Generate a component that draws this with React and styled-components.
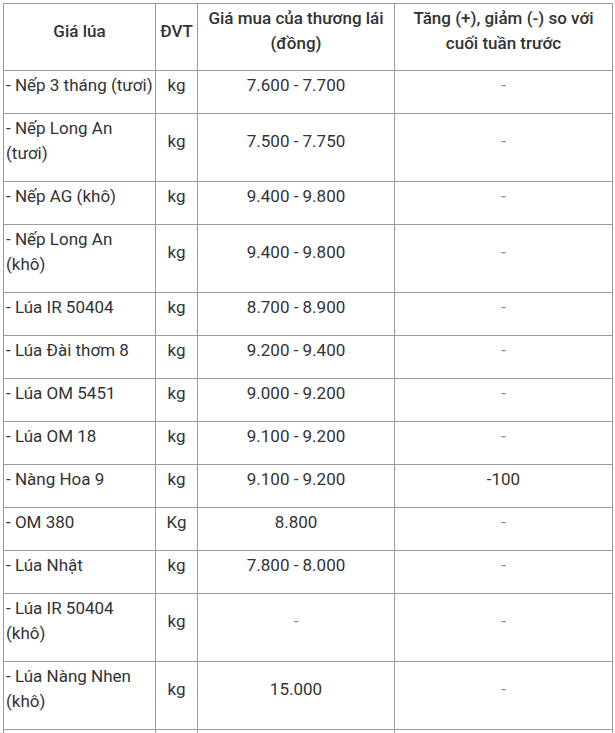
import React from "react";
import styled, { createGlobalStyle } from "styled-components";

const GlobalStyle = createGlobalStyle`
  html, body {
    margin: 0;
    padding: 0;
    background: #fff;
  }
  body {
    font-family: Roboto, "Liberation Sans", Arial, sans-serif;
    color: #333;
  }
`;

const Wrapper = styled.div`
  padding: 3px 0 0 3px;
`;

const PriceTable = styled.table`
  border-collapse: collapse;
  table-layout: fixed;
  width: 609px;
  font-size: 17px;
  line-height: 25px;
`;

const HeadCell = styled.th`
  border: 1px solid #9b9b9b;
  padding: 2px 2px 14px;
  font-weight: 500;
  text-align: center;
  vertical-align: middle;
  color: #333;
`;

const Cell = styled.td`
  border: 1px solid #9b9b9b;
  padding: ${(p) => (p.$left ? "2px 0 15px 2px" : "2px 2px 15px")};
  height: 25px;
  text-align: ${(p) => (p.$left ? "left" : "center")};
  vertical-align: middle;
  color: ${(p) => (p.$muted ? "#8a8a8a" : "#333")};
`;

const rows = [
  { name: "- Nếp 3 tháng (tươi)", unit: "kg", price: "7.600 - 7.700", change: "-" },
  { name: "- Nếp Long An (tươi)", unit: "kg", price: "7.500 - 7.750", change: "-" },
  { name: "- Nếp AG (khô)", unit: "kg", price: "9.400 - 9.800", change: "-" },
  { name: "- Nếp Long An (khô)", unit: "kg", price: "9.400 - 9.800", change: "-" },
  { name: "- Lúa IR 50404", unit: "kg", price: "8.700 - 8.900", change: "-" },
  { name: "- Lúa Đài thơm 8", unit: "kg", price: "9.200 - 9.400", change: "-" },
  { name: "- Lúa OM 5451", unit: "kg", price: "9.000 - 9.200", change: "-" },
  { name: "- Lúa OM 18", unit: "kg", price: "9.100 - 9.200", change: "-" },
  { name: "- Nàng Hoa 9", unit: "kg", price: "9.100 - 9.200", change: "-100" },
  { name: "- OM 380", unit: "Kg", price: "8.800", change: "-" },
  { name: "- Lúa Nhật", unit: "kg", price: "7.800 - 8.000", change: "-" },
  { name: "- Lúa IR 50404 (khô)", unit: "kg", price: "-", change: "-" },
  { name: "- Lúa Nàng Nhen (khô)", unit: "kg", price: "15.000", change: "-" },
];

export default function App() {
  return (
    <>
      <GlobalStyle />
      <Wrapper>
        <PriceTable>
          <colgroup>
            <col style={{ width: 152 }} />
            <col style={{ width: 42 }} />
            <col style={{ width: 197 }} />
            <col style={{ width: 218 }} />
          </colgroup>
          <thead>
            <tr>
              <HeadCell>Giá lúa</HeadCell>
              <HeadCell>ĐVT</HeadCell>
              <HeadCell>Giá mua của thương lái (đồng)</HeadCell>
              <HeadCell>Tăng (+), giảm (-) so với cuối tuần trước</HeadCell>
            </tr>
          </thead>
          <tbody>
            {rows.map((r) => (
              <tr key={r.name}>
                <Cell $left>{r.name}</Cell>
                <Cell>{r.unit}</Cell>
                <Cell $muted={r.price === "-"}>{r.price}</Cell>
                <Cell $muted={r.change === "-"}>{r.change}</Cell>
              </tr>
            ))}
            {/* next row continues below the visible area */}
            <tr>
              <Cell $left />
              <Cell />
              <Cell />
              <Cell />
            </tr>
          </tbody>
        </PriceTable>
      </Wrapper>
    </>
  );
}
